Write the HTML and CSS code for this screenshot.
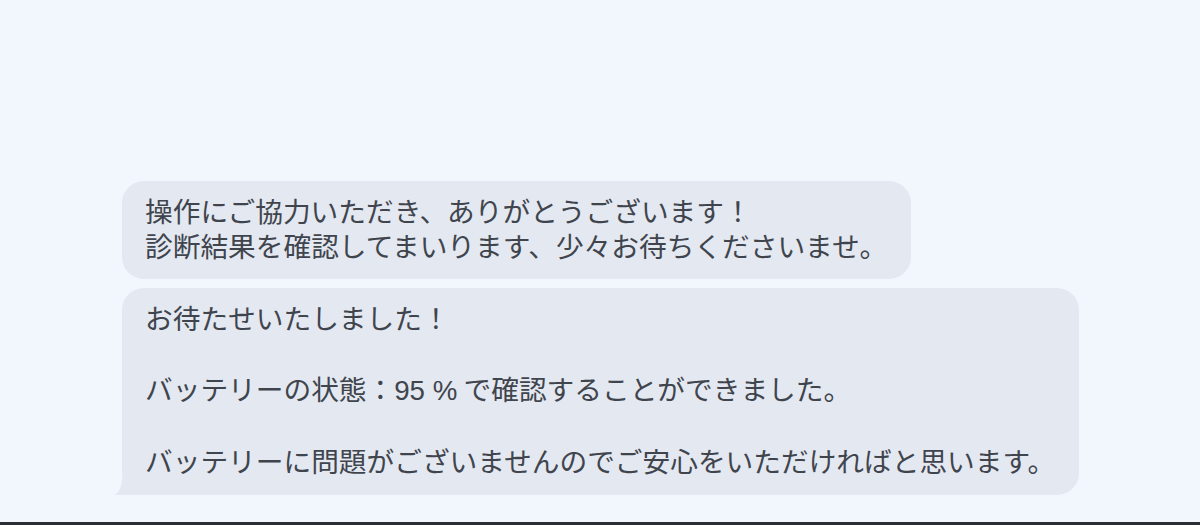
FILE: index.html
```html
<!DOCTYPE html>
<html lang="ja">
<head>
    <meta charset="UTF-8">
    <meta name="viewport" content="width=device-width, initial-scale=1.0">
    <title>メッセージ</title>
    <link rel="stylesheet" href="styles.css">
</head>
<body>
    <div class="thread">
        <div class="bubble">
            <p>操作にご協力いただき、ありがとうございます！<br>診断結果を確認してまいります、少々お待ちくださいませ。</p>
        </div>
        <div class="bubble tail">
            <p>お待たせいたしました！</p>
            <p>&nbsp;</p>
            <p>バッテリーの状態：<span class="num">95 %</span> で確認することができました。</p>
            <p>&nbsp;</p>
            <p>バッテリーに問題がございませんのでご安心をいただければと思います。</p>
        </div>
    </div>
    <div class="bottom-bar"></div>
</body>
</html>
```

FILE: styles.css
```css
body {
    margin: 0;
    padding: 0;
    height: 525px;
    overflow: hidden;
    background-color: #f2f6fd;
    font-family: "Noto Sans CJK JP", "Noto Sans", sans-serif;
    display: flex;
    flex-direction: column;
}

.thread {
    flex: 1;
    display: flex;
    flex-direction: column;
    align-items: flex-start;
    justify-content: flex-end;
    gap: 9px;
    padding: 0 0 27px 122px;
}

.bubble {
    position: relative;
    background-color: #e4e8f1;
    border-radius: 22px;
    padding: 12px 24px 16.5px 23px;
    color: #40454d;
    font-size: 27.7px;
    line-height: 35.2px;
}

.bubble p {
    position: relative;
    z-index: 1;
    margin: 0;
    white-space: nowrap;
}

.num {
    font-family: "Liberation Sans", Arial, sans-serif;
}

/* little tail on the last bubble */
.tail::before {
    content: "";
    position: absolute;
    left: -9px;
    bottom: 0;
    width: 32px;
    height: 16px;
    background-color: #e4e8f1;
}

.tail::after {
    content: "";
    position: absolute;
    left: -24px;
    bottom: 0;
    width: 24px;
    height: 17px;
    background-color: #f2f6fd;
    border-bottom-right-radius: 9px 16px;
}

.bottom-bar {
    height: 3px;
    background-color: #2a2d33;
}
```
